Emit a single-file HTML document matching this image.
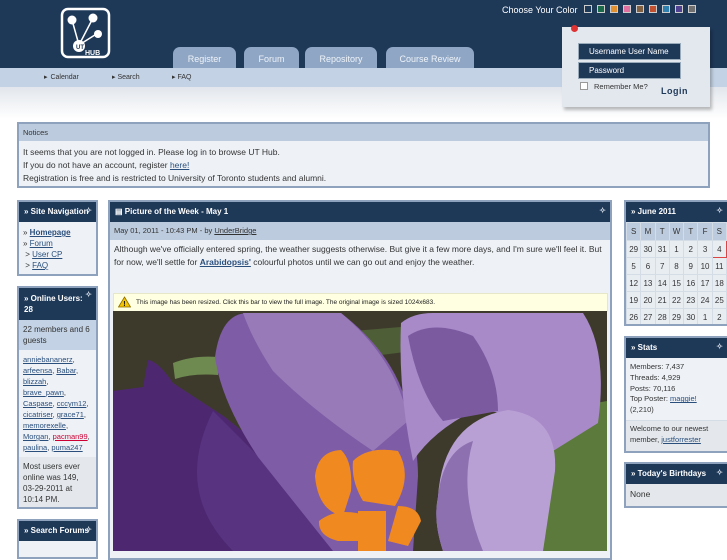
<!DOCTYPE html>
<html><head><meta charset="utf-8"><style>
*{margin:0;padding:0;box-sizing:border-box}
body{width:727px;height:545px;overflow:hidden;background:#fff;font-family:"Liberation Sans",sans-serif;position:relative;color:#333}
.a{position:absolute}
a{color:#2b4f7c;text-decoration:underline}
.hd{background:#1e3858;color:#fff;font-weight:bold;font-size:8px;padding:0 5px;height:20px;line-height:20px;position:relative}
.hd i{position:absolute;right:4px;top:-1px;font-style:normal;font-size:8px;color:#cfd8e4}
.box{position:absolute;border:2px solid #8ea2bd;background:#eef2f7;font-size:8px;overflow:hidden}
.tab{position:absolute;top:47px;height:21px;background:#8fa6c4;border-radius:7px 7px 0 0;color:#eef3f9;font-size:9px;text-align:center;line-height:24px}
.cal{table-layout:fixed}
.cal td{text-align:center;height:17px;padding:0;line-height:15px;border:1px solid #d4dce6;background:#e8edf2;font-size:8px;color:#333}
.cal tr.h td{background:#bccbdd;height:18px}
</style></head><body>
<div class="a" style="left:0;top:0;width:727px;height:68px;background:#1e3858"></div>
<div class="a" style="left:0;top:68px;width:727px;height:19px;background:#c3d2e4"></div>
<div class="a" style="left:0;top:87px;width:727px;height:32px;background:linear-gradient(#e2e6ec,#fff)"></div>
<svg class="a" style="left:60px;top:7px" width="52" height="52" viewBox="0 0 52 52">
<rect x="2" y="2" width="47" height="48" rx="6" fill="none" stroke="#fff" stroke-width="2.5"/>
<g stroke="#fff" stroke-width="1.5"><line x1="12" y1="13" x2="19" y2="38"/><line x1="33" y1="11" x2="19" y2="38"/><line x1="38" y1="26" x2="19" y2="38"/></g>
<circle cx="12" cy="13" r="4.5" fill="#fff"/><circle cx="33" cy="11" r="4.5" fill="#fff"/><circle cx="38" cy="27" r="4" fill="#fff"/><circle cx="19" cy="39" r="6" fill="#fff"/>
<text x="16" y="42" font-size="6" font-weight="bold" fill="#1e3858" font-family="Liberation Sans">UT</text>
<text x="25" y="48" font-size="7" font-weight="bold" fill="#fff" font-family="Liberation Sans">HUB</text></svg>
<div class="a" style="left:502px;top:5px;font-size:9px;color:#fff">Choose Your Color</div>
<div class="a" style="left:584px;top:5px;display:flex;gap:5px">
<span style="width:8px;height:8px;border:1px solid #ccc;background:#1e3858"></span><span style="width:8px;height:8px;border:1px solid #ccc;background:#1a6a4a"></span><span style="width:8px;height:8px;border:1px solid #ccc;background:#e09030"></span><span style="width:8px;height:8px;border:1px solid #ccc;background:#e070a0"></span><span style="width:8px;height:8px;border:1px solid #ccc;background:#806040"></span><span style="width:8px;height:8px;border:1px solid #ccc;background:#c05030"></span><span style="width:8px;height:8px;border:1px solid #ccc;background:#3080b0"></span><span style="width:8px;height:8px;border:1px solid #ccc;background:#504090"></span><span style="width:8px;height:8px;border:1px solid #ccc;background:#707070"></span></div>
<div class="tab" style="left:173px;width:63px">Register</div>
<div class="tab" style="left:244px;width:55px">Forum</div>
<div class="tab" style="left:305px;width:72px">Repository</div>
<div class="tab" style="left:386px;width:88px">Course Review</div>
<div class="a" style="left:44px;top:73px;font-size:7px;color:#333;word-spacing:1px">▸ Calendar</div>
<div class="a" style="left:112px;top:73px;font-size:7px;color:#333">▸ Search</div>
<div class="a" style="left:172px;top:73px;font-size:7px;color:#333">▸ FAQ</div>
<div class="a" style="left:562px;top:27px;width:148px;height:80px;background:#e3e8ee;box-shadow:2px 3px 3px rgba(0,0,0,.25)"></div>
<div class="a" style="left:571px;top:25px;width:7px;height:7px;border-radius:50%;background:#d33"></div>
<div class="a" style="left:578px;top:43px;width:103px;height:17px;background:#1e3858;border:1px solid #9ab;color:#fff;font-size:8px;line-height:15px;padding-left:10px">Username User Name</div>
<div class="a" style="left:578px;top:62px;width:103px;height:17px;background:#1e3858;border:1px solid #9ab;color:#fff;font-size:8px;line-height:15px;padding-left:10px">Password</div>
<div class="a" style="left:580px;top:82px;width:8px;height:8px;background:#fff;border:1px solid #999"></div>
<div class="a" style="left:594px;top:82px;font-size:7.5px;color:#333">Remember Me?</div>
<div class="a" style="left:661px;top:86px;font-size:9px;font-weight:bold;color:#1e3858;letter-spacing:.5px">Login</div>

<div class="box" style="left:17px;top:122px;width:693px;height:66px">
<div style="background:#bccbdd;height:17px;line-height:17px;padding-left:4px;font-size:7.5px">Notices</div>
<div style="padding:5px 4px;font-size:8.5px;line-height:13px">It seems that you are not logged in. Please log in to browse UT Hub.<br>If you do not have an account, register <a href="#">here!</a><br>Registration is free and is restricted to University of Toronto students and alumni.</div></div>

<div class="box" style="left:17px;top:200px;width:81px;height:76px"><div class="hd">» Site Navigation<i>✧</i></div>
<div style="padding:5px 4px;line-height:11px;font-size:8px">» <a href="#"><b>Homepage</b></a><br>» <a href="#">Forum</a><br>&nbsp;&gt; <a href="#">User CP</a><br>&nbsp;&gt; <a href="#">FAQ</a></div></div>

<div class="box" style="left:17px;top:286px;width:81px;height:223px"><div class="hd" style="height:32px;line-height:11px;padding-top:5px">» Online Users: 28<i style="top:1px">✧</i></div>
<div style="background:#c3d2e4;padding:4px;line-height:11px">22 members and 6 guests</div>
<div style="padding:4px;line-height:11px;font-size:7.5px"><a href="#">anniebananerz</a>, <a href="#">arfeensa</a>, <a href="#">Babar</a>, <a href="#">blizzah</a>, <a href="#">brave_pawn</a>, <a href="#">Caspase</a>, <a href="#">cccym12</a>, <a href="#">cicatriser</a>, <a href="#">grace71</a>, <a href="#">memorexelle</a>, <a href="#">Morgan</a>, <a href="#" style="color:#c03">pacman99</a>, <a href="#">paulina</a>, <a href="#">puma247</a></div>
<div style="background:#e4e8ec;padding:4px;line-height:11px;height:60px">Most users ever online was 149, 03-29-2011 at 10:14 PM.</div></div>

<div class="box" style="left:17px;top:519px;width:81px;height:40px"><div class="hd">» Search Forums<i>✧</i></div></div>

<div class="box" style="left:108px;top:200px;width:504px;height:360px"><div class="hd" style="padding-left:5px">▤ Picture of the Week - May 1<i>✧</i></div>
<div style="background:#bccbdd;height:18px;line-height:18px;padding-left:4px;font-size:7.5px">May 01, 2011 - 10:43 PM - by <a href="#" style="color:#333">UnderBridge</a></div>
<div style="padding:3px 4px;font-size:8.5px;line-height:13px">Although we've officially entered spring, the weather suggests otherwise. But give it a few more days, and I'm sure we'll feel it. But for now, we'll settle for <a href="#"><b>Arabidopsis'</b></a> colourful photos until we can go out and enjoy the weather.</div>
<div class="a" style="left:3px;top:91px;width:495px;height:19px;background:#ffffe1;border:1px solid #e6e6c8;font-size:6.5px;line-height:17px;padding-left:22px;color:#222">This image has been resized. Click this bar to view the full image. The original image is sized 1024x683.
<svg class="a" style="left:4px;top:2px" width="13" height="12"><path d="M6.5 1 L12.5 11 L0.5 11 Z" fill="#f5c400" stroke="#8a6a00" stroke-width=".8"/><text x="5.3" y="10" font-size="7" font-weight="bold" font-family="Liberation Sans">!</text></svg></div>
<svg class="a" style="left:3px;top:109px" width="494" height="240" viewBox="0 0 494 240">
<rect width="494" height="240" fill="#3d3a2c"/>
<path d="M440 100 L494 90 L494 240 L430 240Z" fill="#5b7a3c"/>
<path d="M60 52 Q80 44 105 46 L105 64 Q80 62 62 68Z" fill="#6f8a50"/>
<path d="M240 20 L300 15 L300 40 L260 45Z" fill="#4e5e36"/>
<path d="M0 80 L30 76 L35 49 Q45 50 60 72 L112 106 L202 179 L228 240 L0 240Z" fill="#4d2870"/>
<path d="M100 100 L150 150 L215 215 L230 240 L120 240 Q60 180 100 100Z" fill="#573380"/>
<path d="M102 46 Q108 2 135 2 L228 2 Q290 50 297 112 Q305 140 305 165 L300 240 L220 240 Q180 190 145 146 Q108 90 102 46Z" fill="#7f5ca6"/>
<path d="M130 2 L228 2 Q285 50 295 110 L260 140 Q200 100 160 60 Q140 30 130 2Z" fill="#987ab9"/>
<path d="M288 12 Q300 2 320 2 L470 2 Q495 40 485 112 L440 140 Q400 95 360 100 Q320 120 300 150 Q285 80 288 12Z" fill="#a88ac8"/>
<path d="M295 25 Q320 8 360 25 Q385 60 385 100 L330 110 Q305 80 295 25Z" fill="#7c5aa0"/>
<path d="M325 186 Q330 110 395 99 Q445 105 442 160 L430 240 L330 240 Q320 210 325 186Z" fill="#b8a0d4"/>
<path d="M325 186 Q330 140 360 130 Q345 180 370 240 L330 240 Q320 210 325 186Z" fill="#8d70b0"/>
<g fill="#f08a20"><path d="M202 165 Q205 140 228 139 Q240 150 238 180 L230 205 Q205 200 202 165Z"/><path d="M240 150 Q255 135 285 140 Q300 165 282 195 L250 190 Q238 170 240 150Z"/><path d="M206 210 Q225 195 255 205 L250 230 L225 230 Q205 225 206 210Z"/><path d="M285 195 Q305 195 308 210 L295 235 L275 230Z"/><rect x="245" y="200" width="28" height="40"/></g>
</svg></div>

<div class="box" style="left:624px;top:200px;width:103px;height:126px;border-right:0"><div class="hd">» June 2011<i>✧</i></div>
<table class="cal" style="width:100%;border-collapse:collapse">
<tr class="h"><td>S</td><td>M</td><td>T</td><td>W</td><td>T</td><td>F</td><td>S</td></tr>
<tr><td>29</td><td>30</td><td>31</td><td>1</td><td>2</td><td>3</td><td style="border:1px solid #d44">4</td></tr>
<tr><td>5</td><td>6</td><td>7</td><td>8</td><td>9</td><td>10</td><td>11</td></tr>
<tr><td>12</td><td>13</td><td>14</td><td>15</td><td>16</td><td>17</td><td>18</td></tr>
<tr><td>19</td><td>20</td><td>21</td><td>22</td><td>23</td><td>24</td><td>25</td></tr>
<tr><td>26</td><td>27</td><td>28</td><td>29</td><td>30</td><td>1</td><td>2</td></tr></table></div>

<div class="box" style="left:624px;top:336px;width:103px;height:117px;border-right:0;font-size:7.5px"><div class="hd">» Stats<i>✧</i></div>
<div style="padding:4px 4px;line-height:10.8px">Members: 7,437<br>Threads: 4,929<br>Posts: 70,116<br>Top Poster: <a href="#">maggie!</a><br>(2,210)</div>
<div style="background:#e4e8ec;padding:3px 4px;line-height:10.8px;border-top:1px solid #d4dce6;height:40px">Welcome to our newest member, <a href="#">justforrester</a></div></div>

<div class="box" style="left:624px;top:462px;width:103px;height:46px;border-right:0"><div class="hd">» Today's Birthdays<i>✧</i></div>
<div style="padding:5px 4px;font-size:8.5px;background:#e4e8ec;height:22px">None</div></div>
</body></html>
